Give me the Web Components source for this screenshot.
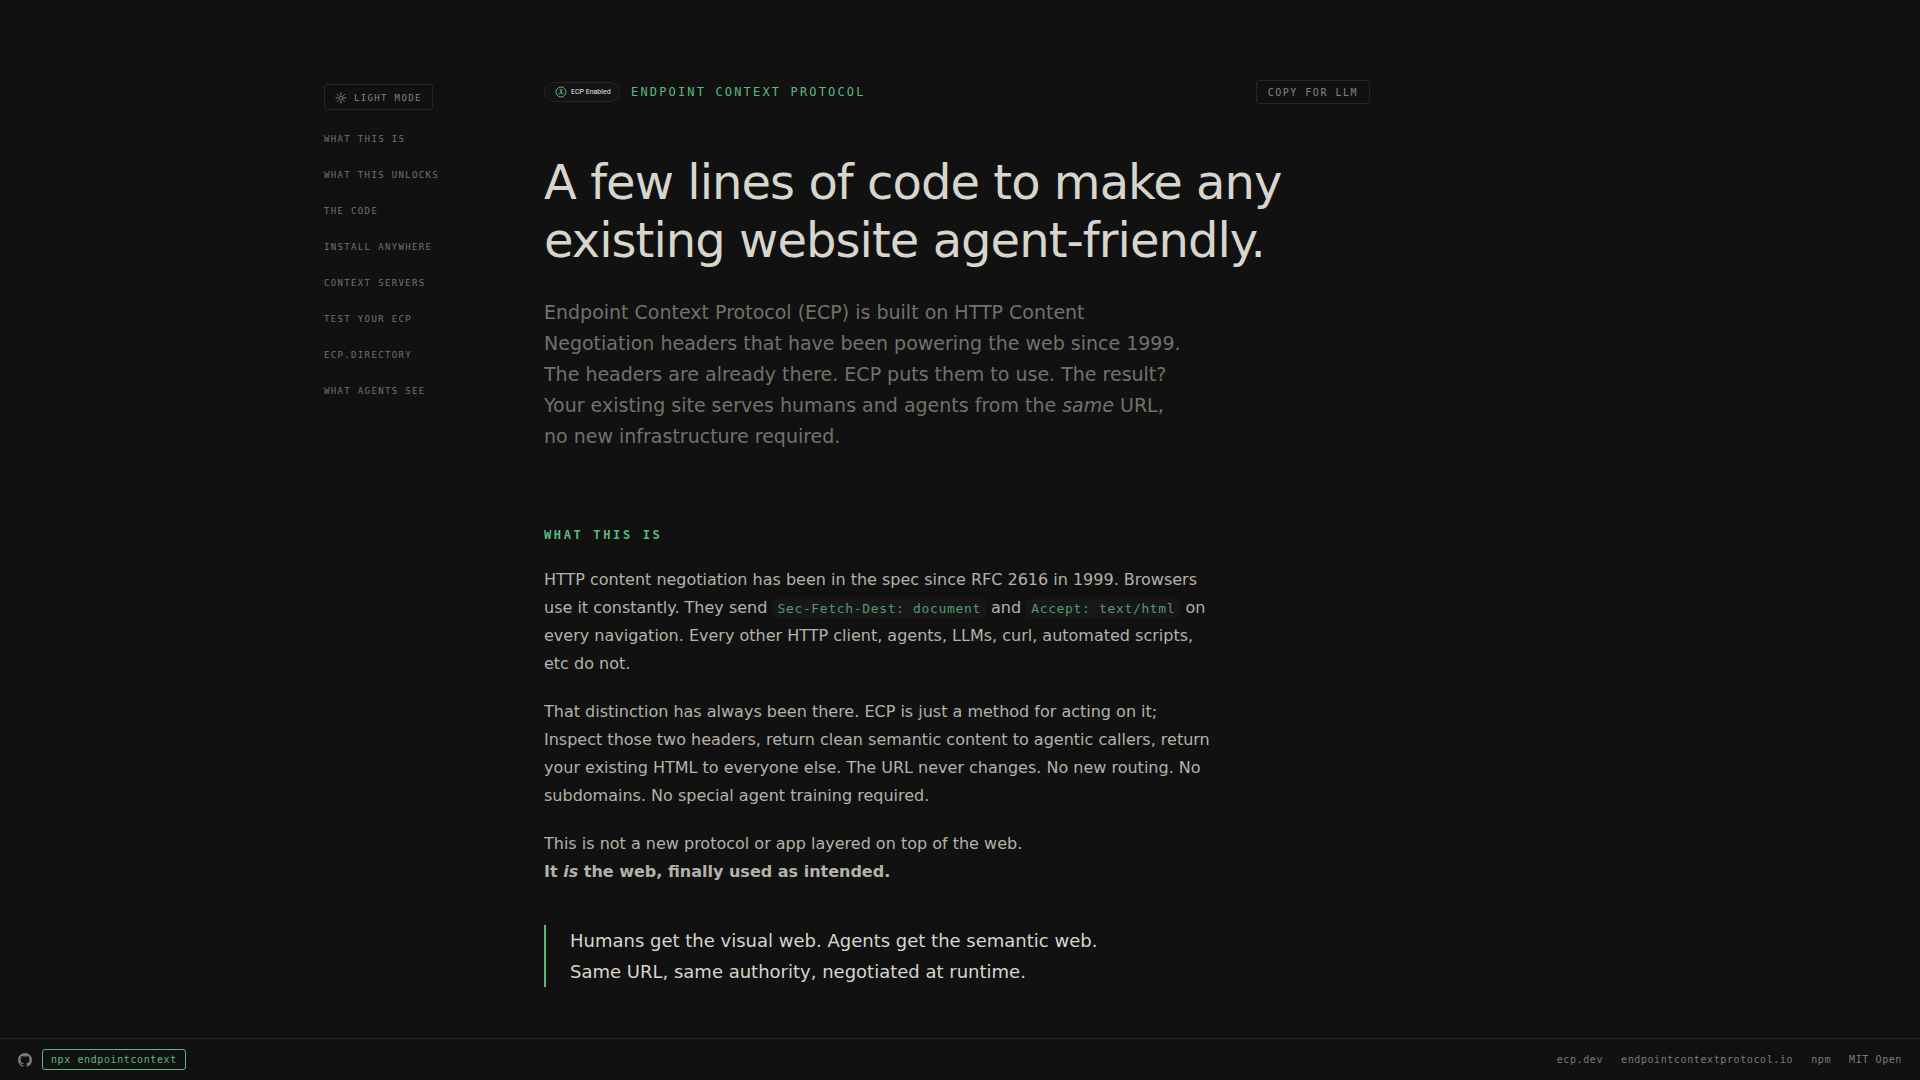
<!DOCTYPE html>
<html lang="en">
<head>
<meta charset="utf-8">
<meta name="viewport" content="width=device-width, initial-scale=1">
<title>Endpoint Context Protocol</title>
<style>
  :root {
    --bg: #111111;
    --line: #262626;
    --heading: #d8d5cd;
    --text: #b5b2aa;
    --muted: #72716d;
    --accent: #5cb880;
    --mono: "DejaVu Sans Mono", monospace;
    --sans: Verdana, "DejaVu Sans", sans-serif;
  }
  body {
    margin: 0;
    background: var(--bg);
    color: var(--text);
    font-family: var(--sans);
  }
  /* slotted into ecp-section, too deep for ::slotted */
  p code {
    padding: 2px 5px;
    border-radius: 3px;
    background: #171717;
    color: #55996f;
    font: 13px/18px var(--mono);
    letter-spacing: 0.05em;
  }
</style>
</head>
<body>

<ecp-page>
  <ecp-sidebar slot="side"></ecp-sidebar>

  <ecp-topbar>Endpoint Context Protocol</ecp-topbar>

  <ecp-hero>
    <span slot="title">A few lines of code to make any existing website agent-friendly.</span>
    Endpoint Context Protocol (ECP) is built on HTTP Content Negotiation headers that have been powering the web since 1999. The headers are already there. ECP puts them to use. The result? Your existing site serves humans and agents from the <em>same</em> URL, no new infrastructure required.
  </ecp-hero>

  <ecp-section id="what" heading="What this is">
    <p>HTTP content negotiation has been in the spec since RFC 2616 in 1999. Browsers use it constantly. They send <code>Sec-Fetch-Dest: document</code> and <code>Accept: text/html</code> on every navigation. Every other HTTP client, agents, LLMs, curl, automated scripts, etc do not.</p>
    <p>That distinction has always been there. ECP is just a method for acting on it; Inspect those two headers, return clean semantic content to agentic callers, return your existing HTML to everyone else. The URL never changes. No new routing. No subdomains. No special agent training required.</p>
    <p>This is not a new protocol or app layered on top of the web.<br><strong>It <em>is</em> the web, finally used as intended.</strong></p>
    <ecp-quote>Humans get the visual web. Agents get the semantic web.<br>Same URL, same authority, negotiated at runtime.</ecp-quote>
  </ecp-section>

  <ecp-footer slot="footer"></ecp-footer>
</ecp-page>

<script>
"use strict";

function attach(host, html) {
  const template = document.createElement("template");
  template.innerHTML = html;
  host.attachShadow({ mode: "open" }).appendChild(template.content);
}

class EcpPage extends HTMLElement {
  constructor() {
    super();
    attach(this, `
      <style>
        :host {
          display: flex;
          flex-direction: column;
          min-height: 100vh;
        }
        .shell {
          flex: 1;
          display: grid;
          grid-template-columns: 156px minmax(0, 826px);
          column-gap: 64px;
          width: 100%;
          max-width: 1272px;
          margin: 0 auto;
          padding: 80px 24px 48px;
        }
      </style>
      <div class="shell">
        <slot name="side"></slot>
        <main><slot></slot></main>
      </div>
      <slot name="footer"></slot>
    `);
  }
}

class EcpSidebar extends HTMLElement {
  constructor() {
    super();
    attach(this, `
      <style>
        :host {
          display: block;
          padding-top: 4px;
          font: 9px/12px var(--mono);
          letter-spacing: 0.15em;
          text-transform: uppercase;
        }
        button {
          display: flex;
          align-items: center;
          gap: 7px;
          height: 26px;
          margin: 0 0 23px;
          padding: 1px 10px 0;
          border: 1px solid var(--line);
          border-radius: 3px;
          background: none;
          color: #85837e;
          font: inherit;
          letter-spacing: inherit;
          text-transform: inherit;
          cursor: pointer;
        }
        nav {
          display: flex;
          flex-direction: column;
          gap: 24px;
        }
        a {
          color: var(--muted);
          text-decoration: none;
        }
      </style>
      <button type="button">
        <svg width="12" height="12" viewBox="0 0 24 24" fill="none" stroke="currentColor" stroke-width="2" stroke-linecap="round" aria-hidden="true">
          <circle cx="12" cy="12" r="4"/>
          <path d="M12 2v3M12 19v3M2 12h3M19 12h3M4.9 4.9l2.1 2.1M17 17l2.1 2.1M4.9 19.1l2.1-2.1M17 7l2.1-2.1"/>
        </svg>
        Light mode
      </button>
      <nav>
        <a href="#what">What this is</a>
        <a href="#unlocks">What this unlocks</a>
        <a href="#code">The code</a>
        <a href="#install">Install anywhere</a>
        <a href="#servers">Context servers</a>
        <a href="#test">Test your ECP</a>
        <a href="#directory">ecp.directory</a>
        <a href="#agents">What agents see</a>
      </nav>
    `);
  }
}

class EcpTopbar extends HTMLElement {
  constructor() {
    super();
    attach(this, `
      <style>
        :host {
          display: flex;
          align-items: center;
          gap: 11px;
          height: 24px;
          color: var(--accent);
          font: 12px/16px var(--mono);
          letter-spacing: 0.18em;
          text-transform: uppercase;
        }
        .badge {
          box-sizing: border-box;
          display: flex;
          align-items: center;
          gap: 4px;
          width: 76px;
          height: 20px;
          padding-left: 10px;
          border: 1px solid var(--line);
          border-radius: 10px;
          background: #131313;
          color: #e8e8e8;
          font: 7px/8px Roboto, sans-serif;
          letter-spacing: 0;
          text-transform: none;
          white-space: nowrap;
        }
        svg {
          color: var(--accent);
        }
        button {
          box-sizing: border-box;
          height: 24px;
          margin-left: auto;
          padding: 2px 11px 0;
          border: 1px solid var(--line);
          border-radius: 3px;
          background: none;
          color: #85837e;
          font: 10px/14px var(--mono);
          letter-spacing: 0.15em;
          text-transform: uppercase;
          cursor: pointer;
        }
      </style>
      <span class="badge">
        <svg width="12" height="12" viewBox="0 0 24 24" fill="none" stroke="currentColor" stroke-width="2" aria-hidden="true">
          <circle cx="12" cy="12" r="10"/>
          <circle cx="12" cy="9" r="2"/>
          <path d="M12 11v3M7 16l5-2 5 2"/>
        </svg>
        <span>ECP Enabled</span>
      </span>
      <slot></slot>
      <button type="button">Copy for LLM</button>
    `);
  }
}

class EcpHero extends HTMLElement {
  constructor() {
    super();
    attach(this, `
      <style>
        :host {
          display: block;
          padding-top: 49px;
        }
        h1 {
          max-width: 780px;
          margin: 0 0 28px;
          color: var(--heading);
          font-size: 48px;
          font-weight: 400;
          line-height: 58px;
          letter-spacing: -0.02em;
        }
        p {
          max-width: 640px;
          margin: 0;
          color: var(--muted);
          font-size: 19px;
          line-height: 31px;
        }
      </style>
      <h1><slot name="title"></slot></h1>
      <p><slot></slot></p>
    `);
  }
}

class EcpSection extends HTMLElement {
  constructor() {
    super();
    attach(this, `
      <style>
        :host {
          display: block;
          padding-top: 75px;
        }
        h2 {
          margin: 0 0 23px;
          color: var(--accent);
          font: 700 12px/16px var(--mono);
          letter-spacing: 0.22em;
          text-transform: uppercase;
        }
        ::slotted(p) {
          max-width: 672px;
          margin: 0 0 20px;
          font-size: 16px;
          line-height: 28px;
        }
      </style>
      <h2></h2>
      <slot></slot>
    `);
    this.shadowRoot.querySelector("h2").textContent = this.getAttribute("heading");
  }
}

class EcpQuote extends HTMLElement {
  constructor() {
    super();
    attach(this, `
      <style>
        :host {
          display: block;
          margin-top: 39px;
        }
        blockquote {
          margin: 0;
          padding-left: 24px;
          border-left: 2px solid var(--accent);
          color: var(--heading);
          font-size: 18px;
          line-height: 31px;
        }
      </style>
      <blockquote><slot></slot></blockquote>
    `);
  }
}

class EcpFooter extends HTMLElement {
  constructor() {
    super();
    attach(this, `
      <style>
        :host {
          position: sticky;
          bottom: 0;
          display: block;
          background: var(--bg);
        }
        footer {
          box-sizing: border-box;
          display: flex;
          align-items: center;
          height: 42px;
          padding: 0 18px;
          border-top: 1px solid var(--line);
          font: 10px/14px var(--mono);
          letter-spacing: 0.06em;
        }
        a {
          color: #7d7b76;
          text-decoration: none;
        }
        .github {
          display: flex;
          margin-right: 10px;
        }
        button {
          box-sizing: border-box;
          height: 21px;
          padding: 0 8px;
          border: 1px solid var(--accent);
          border-radius: 3px;
          background: none;
          color: var(--accent);
          font: inherit;
          letter-spacing: inherit;
          cursor: pointer;
        }
        nav {
          display: flex;
          gap: 18px;
          margin-left: auto;
        }
      </style>
      <footer>
        <a class="github" href="#github" aria-label="GitHub">
          <svg width="14" height="14" viewBox="0 0 16 16" fill="currentColor" aria-hidden="true">
            <path d="M8 0C3.58 0 0 3.58 0 8c0 3.54 2.29 6.53 5.47 7.59.4.07.55-.17.55-.38 0-.19-.01-.82-.01-1.49-2.01.37-2.53-.49-2.69-.94-.09-.23-.48-.94-.82-1.13-.28-.15-.68-.52-.01-.53.63-.01 1.08.58 1.23.82.72 1.21 1.87.87 2.33.66.07-.52.28-.87.51-1.07-1.78-.2-3.64-.89-3.64-3.95 0-.87.31-1.59.82-2.15-.08-.2-.36-1.02.08-2.12 0 0 .67-.21 2.2.82.64-.18 1.32-.27 2-.27s1.36.09 2 .27c1.53-1.04 2.2-.82 2.2-.82.44 1.1.16 1.92.08 2.12.51.56.82 1.27.82 2.15 0 3.07-1.87 3.75-3.65 3.95.29.25.54.73.54 1.48 0 1.07-.01 1.93-.01 2.2 0 .21.15.46.55.38A8.01 8.01 0 0 0 16 8c0-4.42-3.58-8-8-8z"/>
          </svg>
        </a>
        <button type="button">npx endpointcontext</button>
        <nav>
          <a href="#ecp-dev">ecp.dev</a>
          <a href="#io">endpointcontextprotocol.io</a>
          <a href="#npm">npm</a>
          <a href="#license">MIT Open</a>
        </nav>
      </footer>
    `);
  }
}

customElements.define("ecp-page", EcpPage);
customElements.define("ecp-sidebar", EcpSidebar);
customElements.define("ecp-topbar", EcpTopbar);
customElements.define("ecp-hero", EcpHero);
customElements.define("ecp-section", EcpSection);
customElements.define("ecp-quote", EcpQuote);
customElements.define("ecp-footer", EcpFooter);
</script>
</body>
</html>
